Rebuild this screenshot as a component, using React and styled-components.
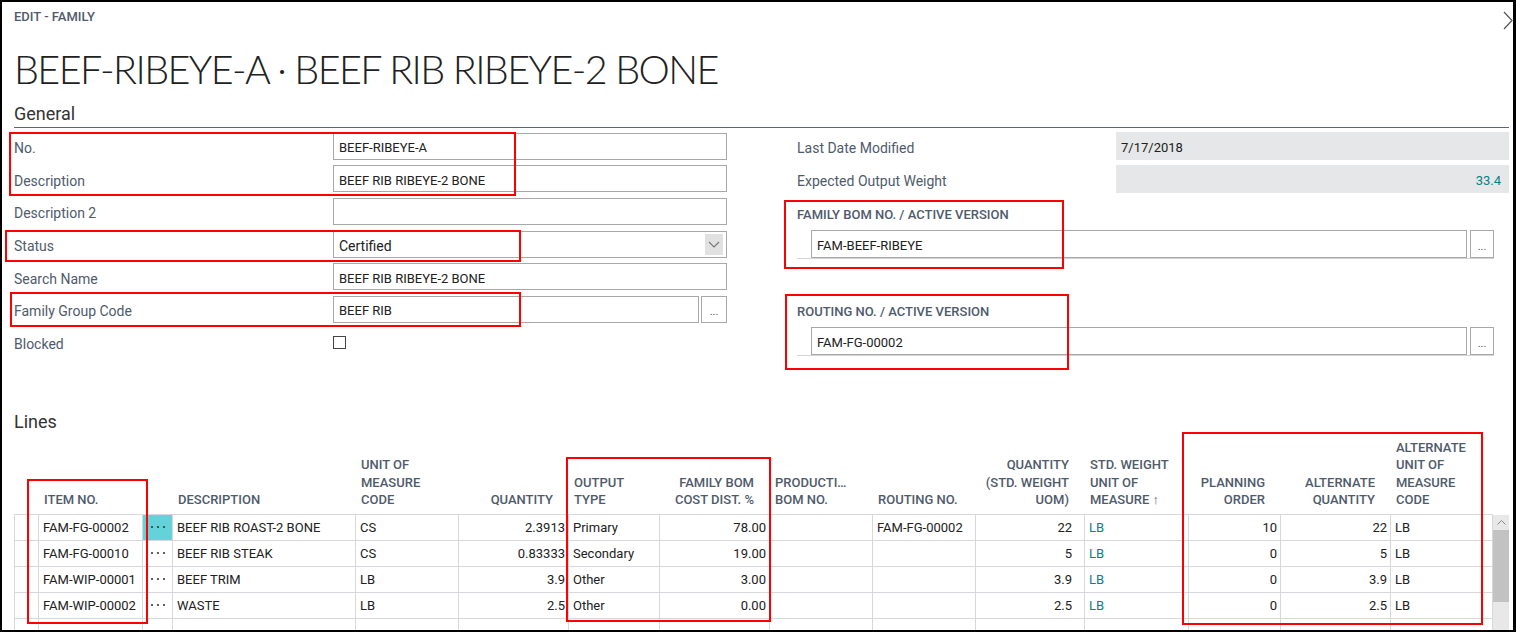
import styled, { createGlobalStyle } from "styled-components";

const GlobalStyle = createGlobalStyle`
  html, body {
    margin: 0;
    padding: 0;
    background: #fff;
  }
  body {
    font-family: Roboto, "Noto Sans", "Liberation Sans", sans-serif;
  }
`;

const Page = styled.div`
  position: relative;
  width: 1516px;
  height: 632px;
  overflow: hidden;
`;

const Frame = styled.div`
  box-sizing: border-box;
  width: 100%;
  height: 100%;
  border: 2px solid #000;
  border-right-width: 3px;
  padding: 0 4px 0 12px;
  background: #fff;
  color: #212121;
  display: flex;
  flex-direction: column;
  overflow: hidden;
`;

const HeaderBar = styled.div`
  display: flex;
  justify-content: space-between;
  align-items: flex-start;
  height: 34px;
  margin-right: -4px;
`;

const Caption = styled.div`
  margin-top: 7px;
  font-size: 13px;
  line-height: 16px;
  font-weight: 500;
  color: #4f5b6b;
  text-transform: uppercase;
`;

const CloseButton = styled.button`
  border: 0;
  background: none;
  padding: 0;
  margin-top: 9px;
  width: 10px;
  height: 19px;
  display: flex;
`;

const Title = styled.h1`
  margin: 9px 0 0;
  font-family: Lato, Roboto, sans-serif;
  font-size: 39.5px;
  line-height: 48px;
  font-weight: 300;
  letter-spacing: -1.6px;
  color: #212121;
  white-space: nowrap;
`;

const SectionHeading = styled.h2`
  margin: ${(p) => p.$top}px 0 0;
  padding-bottom: 1px;
  font-size: 18px;
  line-height: 24px;
  font-weight: 400;
  color: #333;
  border-bottom: ${(p) => (p.$rule ? "1px solid #5b6573" : "none")};
`;

const FieldsGrid = styled.div`
  display: grid;
  grid-template-columns: 713px 712px;
  column-gap: 70px;
  align-items: start;
  margin-top: 2px;
`;

const Column = styled.div`
  display: flex;
  flex-direction: column;
`;

const FieldRow = styled.div`
  display: grid;
  grid-template-columns: 319px 1fr;
  align-items: center;
  height: 32.6px;
`;

const Label = styled.div`
  padding-top: 4px;
  font-size: 14px;
  line-height: 20px;
  color: #4f5b6b;
  white-space: nowrap;
`;

const InputLine = styled.div`
  display: flex;
  gap: ${(p) => p.$gap || 2}px;
`;

const Input = styled.div`
  box-sizing: border-box;
  flex: 1;
  height: ${(p) => p.$h || 27}px;
  border: 1px solid #a8a8a8;
  padding: 3px 5px 0;
  display: flex;
  align-items: center;
  justify-content: space-between;
  font-size: 13px;
  color: #212121;
  background: #fff;
  white-space: nowrap;
`;

const SelectText = styled.span`
  font-size: 14px;
`;

const DropArrow = styled.span`
  width: 18px;
  height: 21px;
  margin: -3px -2px 0 0;
  background: #e1e1e1;
  display: flex;
  align-items: center;
  justify-content: center;
`;

const LookupButton = styled.button`
  box-sizing: border-box;
  width: ${(p) => p.$w || 26}px;
  height: ${(p) => p.$h || 27}px;
  border: 1px solid #a8a8a8;
  background: #fff;
  padding: 0 0 6px;
  display: flex;
  align-items: flex-end;
  justify-content: center;
  font-family: inherit;
  font-size: 11px;
  line-height: 8px;
  color: #555;
`;

const Checkbox = styled.span`
  box-sizing: border-box;
  width: 13px;
  height: 13px;
  margin-top: 2px;
  border: 1px solid #444;
  background: #fff;
`;

const ReadonlyBox = styled.div`
  box-sizing: border-box;
  height: 28px;
  padding: 3px 8px 0 5px;
  background: #e6e7e8;
  font-size: 13px;
  line-height: 25px;
  text-align: ${(p) => (p.$right ? "right" : "left")};
  color: ${(p) => (p.$accent ? "#00848a" : "#212121")};
`;

const Group = styled.div`
  margin: ${(p) => p.$top}px 15px 0 0;
  border-bottom: 1px solid #d4d4d4;
`;

const GroupTitle = styled.div`
  padding-top: 1px;
  font-size: 13px;
  line-height: 20px;
  font-weight: 500;
  color: #4f5b6b;
  text-transform: uppercase;
  white-space: nowrap;
`;

const GroupBody = styled.div`
  margin-top: 5px;
  padding-left: 14px;
`;

const HeaderRow = styled.div`
  box-sizing: border-box;
  display: grid;
  grid-template-columns: ${(p) => p.$cols};
  width: 1479px;
  height: 79.6px;
  padding-left: 1px;
  border-bottom: 1px solid #d5d8dc;
`;

const HeadCell = styled.div`
  display: flex;
  flex-direction: column;
  justify-content: flex-end;
  padding: 0 ${(p) => (p.$num ? 16 : 2)}px 5px 5px;
  font-size: 13px;
  line-height: 17.5px;
  font-weight: 500;
  color: #4f5b6b;
  text-transform: uppercase;
  text-align: ${(p) => (p.$num ? "right" : "left")};
  white-space: nowrap;
`;

const BodyArea = styled.div`
  flex: 1;
  display: flex;
  min-height: 0;
`;

const Rows = styled.div`
  width: 1479px;
  overflow: hidden;
`;

const Row = styled.div`
  box-sizing: border-box;
  display: grid;
  grid-template-columns: ${(p) => p.$cols};
  height: 26px;
  border-left: 1px solid #d5d8dc;
  border-bottom: 1px solid #d5d8dc;
`;

const Cell = styled.div`
  border-right: 1px solid #d5d8dc;
  padding: 1px ${(p) => p.$pr}px 0 4px;
  font-size: 13px;
  line-height: 24px;
  white-space: nowrap;
  overflow: hidden;
  text-align: ${(p) => (p.$num ? "right" : "left")};
  color: ${(p) => (p.$link ? "#00848a" : "#212121")};
`;

const DotsCell = styled.div`
  border-right: 1px solid #d5d8dc;
  background: ${(p) => (p.$active ? "#63d2d9" : "transparent")};
  display: flex;
  align-items: center;
  justify-content: center;
`;

const Scrollbar = styled.div`
  width: 16px;
  background: #e8e8e8;
  display: flex;
  flex-direction: column;
  align-items: center;
`;

const ScrollArrow = styled.div`
  height: 15px;
  display: flex;
  align-items: center;
`;

const ScrollThumb = styled.div`
  width: 100%;
  height: 72px;
  background: #c2c2c2;
`;

const Mark = styled.div`
  position: absolute;
  box-sizing: border-box;
  left: ${(p) => p.$x}px;
  top: ${(p) => p.$y}px;
  width: ${(p) => p.$w}px;
  height: ${(p) => p.$h}px;
  border: 2px solid #f00;
  pointer-events: none;
`;

const leftFields = [
  { label: "No.", value: "BEEF-RIBEYE-A" },
  { label: "Description", value: "BEEF RIB RIBEYE-2 BONE" },
  { label: "Description 2", value: "" },
  { label: "Status", value: "Certified", kind: "select" },
  { label: "Search Name", value: "BEEF RIB RIBEYE-2 BONE" },
  { label: "Family Group Code", value: "BEEF RIB", kind: "lookup" },
  { label: "Blocked", kind: "checkbox" },
];

const columns = [
  { key: "sel", width: 24, head: [] },
  { key: "item", width: 104, head: ["ITEM NO."] },
  { key: "dots", width: 30, head: [] },
  { key: "desc", width: 183, head: ["DESCRIPTION"] },
  { key: "uom", width: 103, head: ["UNIT OF", "MEASURE", "CODE"] },
  { key: "qty", width: 110, head: ["QUANTITY"], num: true },
  { key: "out", width: 91, head: ["OUTPUT", "TYPE"] },
  { key: "cost", width: 110, head: ["FAMILY BOM", "COST DIST. %"], num: true },
  { key: "prod", width: 103, head: ["PRODUCTI…", "BOM NO."] },
  { key: "route", width: 103, head: ["ROUTING NO."] },
  { key: "qstd", width: 109, head: ["QUANTITY", "(STD. WEIGHT", "UOM)"], num: true, pad: 12 },
  { key: "stduom", width: 104, head: ["STD. WEIGHT", "UNIT OF", "MEASURE ↑"], link: true },
  { key: "plan", width: 92, head: ["PLANNING", "ORDER"], num: true },
  { key: "aqty", width: 110, head: ["ALTERNATE", "QUANTITY"], num: true },
  { key: "auom", width: 102, head: ["ALTERNATE", "UNIT OF", "MEASURE", "CODE"] },
];

const gridCols = columns.map((c) => `${c.width}px`).join(" ");

const lines = [
  { item: "FAM-FG-00002", desc: "BEEF RIB ROAST-2 BONE", uom: "CS", qty: "2.3913", out: "Primary", cost: "78.00", route: "FAM-FG-00002", qstd: "22", stduom: "LB", plan: "10", aqty: "22", auom: "LB" },
  { item: "FAM-FG-00010", desc: "BEEF RIB STEAK", uom: "CS", qty: "0.83333", out: "Secondary", cost: "19.00", qstd: "5", stduom: "LB", plan: "0", aqty: "5", auom: "LB" },
  { item: "FAM-WIP-00001", desc: "BEEF TRIM", uom: "LB", qty: "3.9", out: "Other", cost: "3.00", qstd: "3.9", stduom: "LB", plan: "0", aqty: "3.9", auom: "LB" },
  { item: "FAM-WIP-00002", desc: "WASTE", uom: "LB", qty: "2.5", out: "Other", cost: "0.00", qstd: "2.5", stduom: "LB", plan: "0", aqty: "2.5", auom: "LB" },
  {},
];

const marks = [
  { x: 9, y: 132, w: 507, h: 64 },
  { x: 5, y: 230, w: 516, h: 32 },
  { x: 10, y: 292, w: 511, h: 35 },
  { x: 784, y: 200, w: 280, h: 69 },
  { x: 785, y: 294, w: 284, h: 76 },
  { x: 27, y: 479, w: 121, h: 145 },
  { x: 566, y: 457, w: 205, h: 165 },
  { x: 1182, y: 432, w: 301, h: 193 },
];

function Dots() {
  return (
    <svg width="16" height="4" viewBox="0 0 16 4">
      <circle cx="2" cy="2" r="1.1" fill="#3a3a3a" />
      <circle cx="8" cy="2" r="1.1" fill="#3a3a3a" />
      <circle cx="14" cy="2" r="1.1" fill="#3a3a3a" />
    </svg>
  );
}

function FieldControl({ field }) {
  if (field.kind === "checkbox") return <Checkbox />;
  if (field.kind === "select") {
    return (
      <Input>
        <SelectText>{field.value}</SelectText>
        <DropArrow>
          <svg width="12" height="7" viewBox="0 0 12 7">
            <polyline points="1,1 6,6 11,1" fill="none" stroke="#777" strokeWidth="1.1" />
          </svg>
        </DropArrow>
      </Input>
    );
  }
  if (field.kind === "lookup") {
    return (
      <InputLine>
        <Input>{field.value}</Input>
        <LookupButton>...</LookupButton>
      </InputLine>
    );
  }
  return <Input>{field.value}</Input>;
}

function LookupGroup({ title, value, top }) {
  return (
    <Group $top={top}>
      <GroupTitle>{title}</GroupTitle>
      <GroupBody>
        <InputLine $gap={3}>
          <Input $h={28}>{value}</Input>
          <LookupButton $w={24} $h={28}>...</LookupButton>
        </InputLine>
      </GroupBody>
    </Group>
  );
}

export default function App() {
  return (
    <Page>
      <GlobalStyle />
      <Frame>
        <HeaderBar>
          <Caption>Edit - Family</Caption>
          <CloseButton aria-label="Close">
            <svg width="10" height="19" viewBox="0 0 10 19">
              <polyline points="1,1 9,9.5 1,18" fill="none" stroke="#555" strokeWidth="1.2" />
            </svg>
          </CloseButton>
        </HeaderBar>

        <Title>BEEF-RIBEYE-A · BEEF RIB RIBEYE-2 BONE</Title>

        <SectionHeading $top={9} $rule>General</SectionHeading>

        <FieldsGrid>
          <Column>
            {leftFields.map((f) => (
              <FieldRow key={f.label}>
                <Label>{f.label}</Label>
                <FieldControl field={f} />
              </FieldRow>
            ))}
          </Column>
          <Column>
            <FieldRow>
              <Label>Last Date Modified</Label>
              <ReadonlyBox>7/17/2018</ReadonlyBox>
            </FieldRow>
            <FieldRow>
              <Label>Expected Output Weight</Label>
              <ReadonlyBox $right $accent>33.4</ReadonlyBox>
            </FieldRow>
            <LookupGroup top={9} title="Family BOM No. / Active Version" value="FAM-BEEF-RIBEYE" />
            <LookupGroup top={42} title="Routing No. / Active Version" value="FAM-FG-00002" />
          </Column>
        </FieldsGrid>

        <SectionHeading $top={52}>Lines</SectionHeading>

        <HeaderRow $cols={gridCols}>
          {columns.map((c) => (
            <HeadCell key={c.key} $num={c.num}>
              {c.head.map((line) => (
                <span key={line}>{line}</span>
              ))}
            </HeadCell>
          ))}
        </HeaderRow>

        <BodyArea>
          <Rows>
            {lines.map((line, i) => (
              <Row key={i} $cols={gridCols}>
                {columns.map((c) =>
                  c.key === "dots" ? (
                    <DotsCell key={c.key} $active={i === 0}>
                      {line.item && <Dots />}
                    </DotsCell>
                  ) : (
                    <Cell key={c.key} $num={c.num} $link={c.link} $pr={c.pad || 3}>
                      {line[c.key]}
                    </Cell>
                  )
                )}
              </Row>
            ))}
          </Rows>
          <Scrollbar>
            <ScrollArrow>
              <svg width="9" height="5" viewBox="0 0 9 5">
                <polyline points="0.5,4.5 4.5,0.5 8.5,4.5" fill="none" stroke="#888" strokeWidth="1" />
              </svg>
            </ScrollArrow>
            <ScrollThumb />
          </Scrollbar>
        </BodyArea>
      </Frame>

      {marks.map((m, i) => (
        <Mark key={i} $x={m.x} $y={m.y} $w={m.w} $h={m.h} />
      ))}
    </Page>
  );
}
